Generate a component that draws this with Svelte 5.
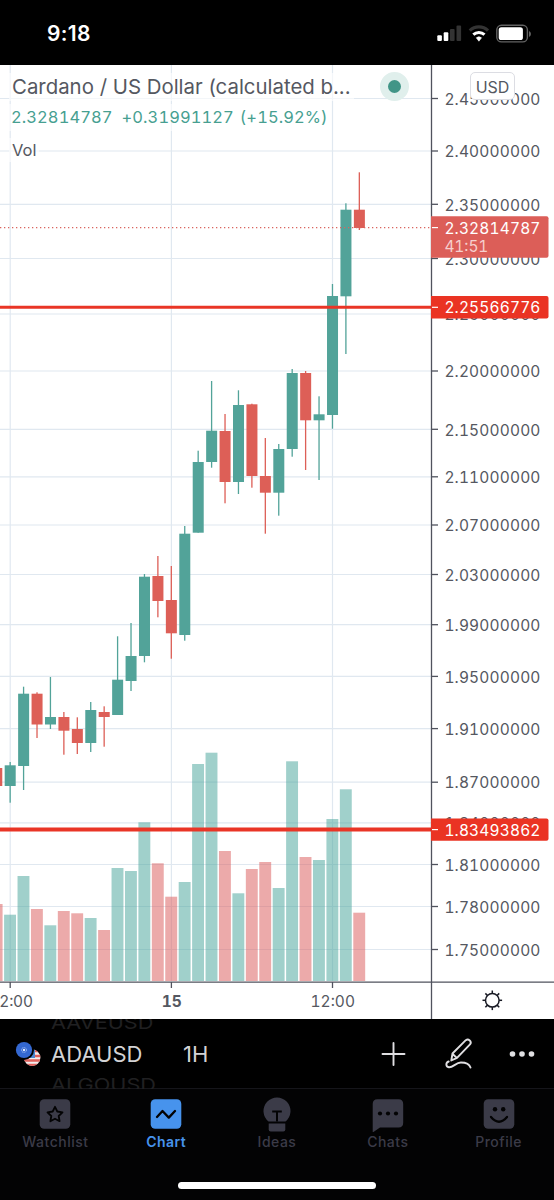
<script>
  const X0 = 10.2, STEP = 13.43;
  // [high, body top, body bottom, low, rising, volume top]
  const bars = [
    [768, 768, 786, 786, 0, 904], [762, 765.3, 786, 802.7, 1, 914.7], [686.7, 693.7, 766, 790, 1, 876],
    [692.3, 693.7, 724.5, 738, 0, 909], [677, 717, 724.5, 729, 1, 925.3], [712, 717, 730.7, 754.7, 0, 911],
    [717.3, 729, 743, 754, 0, 913.3], [702, 710, 743, 752, 1, 918], [706.3, 712, 717, 746.7, 0, 930],
    [636.3, 679.7, 715, 715, 1, 868], [623, 656, 681, 691, 1, 871], [574, 576.7, 656, 662.3, 1, 822.3],
    [556, 576, 601, 617.3, 0, 863.3], [566, 600, 633.3, 658.7, 0, 896.7], [526, 533.7, 635, 640.7, 1, 882],
    [450.7, 462, 532.7, 532.7, 1, 764], [381, 430.7, 462, 467.7, 1, 752.7], [414, 431, 482, 503.3, 0, 851],
    [390.3, 405, 482, 494, 1, 893.3], [403.7, 404.3, 476, 487.7, 0, 869], [438, 476, 492.7, 533.7, 0, 862],
    [444, 449, 492.7, 515.7, 1, 888], [369, 373, 449, 456.7, 1, 761.3], [371, 373, 420.3, 470, 0, 857],
    [396.3, 414.3, 420.3, 480, 1, 860], [284, 296, 415, 428.7, 1, 819], [203.3, 209.7, 296.3, 354, 1, 789.3],
    [172.3, 209.7, 228, 230, 0, 912.7],
  ].map((b, i) => ({ x: X0 + (i - 1) * STEP, hi: b[0], top: b[1], bot: b[2], lo: b[3], up: b[4], vol: b[5] }));
  const prices = [
    [98.5, '2.45'], [151, '2.40'], [204.3, '2.35'], [258.5, '2.30'], [314, '2.25'], [371, '2.20'], [429.3, '2.15'],
    [476.8, '2.11'], [525, '2.07'], [574.5, '2.03'], [624.7, '1.99'], [676.4, '1.95'], [728.6, '1.91'], [782.2, '1.87'],
    [822.8, '1.84'], [864.5, '1.81'], [906.5, '1.78'], [949.5, '1.75'],
  ];
  const rays = [10.2, 171.4, 332.5];
  const levels = [[307.3, '2.25566776', 3], [829.6, '1.83493862', 4]];
</script>

<div class="screen">
  <header class="status">
    <span class="clock">9:18</span>
    <svg width="98" height="20" viewBox="436 24 98 20">
      <g fill="#fff"><rect x="437.3" y="35.2" width="4.6" height="5.8" rx="1" /><rect x="443.7" y="32.3" width="4.600" height="8.700" rx="1" /></g>
      <g fill="#333"><rect x="450" y="29" width="4.600" height="12" rx="1" /><rect x="456.500" y="25.500" width="4.600" height="15.500" rx="1" /></g>
      <path d="M469.800 30.600a13.200 13.200 0 0 1 18.200 0" fill="none" stroke="#333" stroke-width="3.200" />
      <path d="M473.300 34.600a8.300 8.300 0 0 1 11.200 0" fill="none" stroke="#fff" stroke-width="3" />
      <path d="M476.300 37.800a4 4 0 0 1 5.200 0l-2.600 3.400z" fill="#fff" stroke="#fff" stroke-width=".6" />
      <rect x="496.800" y="25.300" width="30.600" height="16.600" rx="4.600" fill="none" stroke="#626262" stroke-width="1.400" />
      <rect x="498.700" y="27.200" width="24.200" height="12.800" rx="2.600" fill="#fff" />
      <path d="M529 31v6q2-1 2-3t-2-3z" fill="#626262" />
    </svg>
  </header>

  <main class="chart">
    <svg class="plot" width="554" height="954" viewBox="0 65 554 954">
      <g stroke="#e0e8f0" stroke-width="1.200">
        {#each prices as [y]}<line x1="0" x2="431" y1={y} y2={y} />{/each}
        {#each rays as x}<line x1={x} x2={x} y1="65" y2="981" />{/each}
      </g>
      {#each bars as b}
        <rect x={b.x - 6.1} y={b.vol} width="11.900" height={981 - b.vol} fill={b.up ? '#42a298' : '#da5656'} fill-opacity=".5" />
      {/each}
      {#each bars as b}
        <g fill={b.up ? '#52a399' : '#dd5f57'}>
          <rect x={b.x - 0.7} y={b.hi} width="1.300" height={b.lo - b.hi} />
          <rect x={b.x - 5.5} y={b.top} width="11" height={b.bot - b.top} />
        </g>
      {/each}
      <line x1="0" x2="431" y1="227.600" y2="227.600" stroke="#d9655f" stroke-width="1.200" stroke-dasharray="1.300 2.700" />
      {#each levels as [y, , w]}<line x1="0" x2="431" y1={y} y2={y} stroke="#e93526" stroke-width={w} />{/each}
      <g stroke="#50535e" stroke-width="1.300">
        <path d="M431.500 65V1019M0 982.200H554" />
        {#each prices as [y]}<line x1="431.500" x2="438" y1={y} y2={y} />{/each}
        {#each rays as x}<line x1={x} x2={x} y1="982" y2="988" />{/each}
      </g>
      <g class="label">
        {#each prices as [y, p]}<text x="444.400" y={y + 6.2} textLength="96">{p}000000</text>{/each}
        <text x="-10.500" y="1007.300" textLength="43.500">12:00</text>
        <text class="bold" x="161.800" y="1007.300" textLength="20">15</text>
        <text x="310.500" y="1007.300" textLength="44.500">12:00</text>
      </g>
      {#each levels as [y, p]}
        <path d="M431 {y - 11.2}h115.500q2 0 2 2v18.400q0 2-2 2H431z" fill="#ea3323" />
        <path d="M432 {y}h6" stroke="#fff" stroke-width="1.200" />
        <text class="label light" x="444.400" y={y + 5.900} textLength="96">{p}</text>
      {/each}
      <path d="M431 216.300h115.500q2 0 2 2v37.400q0 2-2 2H431z" fill="#dc5e58" />
      <path d="M432 227.600h6" stroke="#fff" stroke-width="1.200" />
      <text class="label light" x="444.400" y="233.500" textLength="96">2.32814787</text>
      <text class="label soft" x="444.400" y="252" textLength="44">41:51</text>
      <g fill="none" stroke="#181a24" stroke-width="1.500">
        <circle cx="492.300" cy="1000.300" r="6.800" />
        {#each [0, 45, 90, 135, 180, 225, 270, 315] as a}<path d="M492.300 993.500v-3" transform="rotate({a} 492.300 1000.300)" />{/each}
      </g>
    </svg>
    <div class="legend">
      <div class="title">Cardano / US Dollar (calculated b...</div>
      <div class="quote"><span>2.32814787</span><span>+0.31991127</span><span>(+15.92%)</span></div>
      <div class="vol">Vol</div>
    </div>
    <i class="live"></i>
    <span class="unit">USD</span>
  </main>

  <section class="toolbar">
    <svg class="pair" width="26" height="26" viewBox="15 1041 26 26">
      <defs><clipPath id="flag"><circle cx="32.200" cy="1057.800" r="8.200" /></clipPath></defs>
      <g clip-path="url(#flag)">
        <path d="M24 1049h17v17H24z" fill="#f3eeee" />
        <path d="M24 1051h17M24 1056h17M24 1060.500h17M24 1065h17" stroke="#e0605b" stroke-width="2.300" />
        <path d="M24 1049h11v9H24z" fill="#4b86d0" />
      </g>
      <circle cx="24" cy="1050" r="10" fill="#000" />
      <circle cx="24" cy="1050" r="8.100" fill="#3468d1" />
      <circle cx="24" cy="1050" r="2.500" fill="none" stroke="#a9c2f5" stroke-width="1" stroke-dasharray="1 .6" />
      <circle cx="24" cy="1050" r="1.200" fill="#e5edff" />
    </svg>
    <div class="wheel"><span class="ghost">AAVEUSD</span><span class="symbol">ADAUSD</span><span class="ghost">ALGOUSD</span></div>
    <span class="interval">1H</span>
    <svg class="tools" width="160" height="36" viewBox="378 1036 160 36" fill="none" stroke="#e0dfe2" stroke-width="1.900" stroke-linecap="round" stroke-linejoin="round">
      <path d="M382.500 1054h22M393.500 1043v22" />
      <path d="M451.300 1060.500l1.200-7 13.300-13.300q2-1.400 3.900.2 2 2 .3 4l-13 13.500zM452.400 1053.800l4.300 4.100" />
      <path d="M448.700 1061.500c-3 1-3.300 5 .2 5.700 4 .5 7-4.700 12-4.700 5 0 8.500 1.500 9.600 5" />
      <g fill="#e0dfe2" stroke="none"><circle cx="512.500" cy="1054" r="2.800" /><circle cx="522" cy="1054" r="2.800" /><circle cx="531.500" cy="1054" r="2.800" /></g>
    </svg>
  </section>

  <nav class="tabs">
    <div class="tab"><svg width="36" height="36" viewBox="-18 -18 36 36"><rect x="-15.300" y="-14.700" width="30.600" height="29.400" rx="4.500" fill="currentColor" /><path d="M0-7.200 2.300-2.500 7.500-1.700 3.700 2 4.600 7.200 0 4.700-4.600 7.200-3.700 2-7.500-1.700-2.300-2.500z" fill="none" stroke="#030304" stroke-width="1.800" stroke-linejoin="round" /></svg><span>Watchlist</span></div>
    <div class="tab on"><svg width="36" height="36" viewBox="-18 -18 36 36"><rect x="-15.300" y="-14.700" width="30.600" height="29.400" rx="4.500" fill="currentColor" /><path d="M-9 3-3.500-3 2.800 3.600 9-3" fill="none" stroke="#030304" stroke-width="2.300" stroke-linecap="round" stroke-linejoin="round" /></svg><span>Chart</span></div>
    <div class="tab"><svg width="36" height="36" viewBox="-18 -18 36 36"><path d="M-8.500 7.500A13.500 13.500 0 1 1 8.500 7.500z" fill="currentColor" /><path d="M-8.300 9.600H8.300v5.800q0 2-2 2H-6.300q-2 0-2-2z" fill="currentColor" /><path d="M-4.800-2.500H4.800M0-2.500V7.500" stroke="#030304" stroke-width="2" /></svg><span>Ideas</span></div>
    <div class="tab"><svg width="36" height="36" viewBox="-18 -18 36 36"><path d="M-10.500-14.700h21q4.700 0 4.700 4.700V8.800q0 4.700-4.700 4.700H-8l-7.300 5V-10q0-4.700 4.800-4.700z" fill="currentColor" /><g fill="#030304"><circle cx="-8" cy="-.5" r="2.100" /><circle cy="-.5" r="2.100" /><circle cx="8" cy="-.5" r="2.100" /></g></svg><span>Chats</span></div>
    <div class="tab"><svg width="36" height="36" viewBox="-18 -18 36 36"><rect x="-15.300" y="-14.700" width="30.600" height="29.400" rx="4.500" fill="currentColor" /><circle cx="-4" cy="-4.700" r="2.200" fill="#030304" /><circle cx="4.200" cy="-4.700" r="2.200" fill="#030304" /><path d="M-8 3Q0 12.500 8 3" fill="none" stroke="#030304" stroke-width="2.300" stroke-linecap="round" /></svg><span>Profile</span></div>
    <i class="home"></i>
  </nav>
</div>

<style>
  :global(body) { margin: 0; background: #000; }
  .screen { width: 554px; height: 1200px; display: flex; flex-direction: column; background: #000; font-family: Inter, "Liberation Sans", sans-serif; overflow: hidden; }
  .status { height: 65px; box-sizing: border-box; padding: 0 20px 0 47px; display: flex; justify-content: space-between; align-items: flex-start; color: #fff; }
  .status svg { margin-top: 24px; }
  .clock { margin-top: 21px; font-size: 21px; line-height: 26px; font-weight: 600; letter-spacing: .3px; }
  .chart { position: relative; height: 954px; background: #fff; }
  .plot { display: block; }
  .label { font-size: 15.500px; fill: #555861; font-feature-settings: "tnum"; }
  .light { fill: #fff; }
  .soft { fill: #f6cfcd; }
  .bold { font-weight: 700; }
  .legend { position: absolute; left: 9px; top: 8px; color: #555861; display: flex; flex-direction: column; align-items: flex-start; }
  .legend > div { background: rgba(255, 255, 255, .6); padding: 0 3px; white-space: nowrap; }
  .title { font-size: 20.400px; line-height: 28px; }
  .quote { display: flex; margin-top: 3px; margin-left: -1px; font-size: 16.500px; line-height: 27px; color: #479f91; font-feature-settings: "tnum"; letter-spacing: .08px; }
  .quote span:nth-child(2) { margin: 0 6px 0 9px; }
  .vol { margin-top: 7px; font-size: 16.500px; line-height: 24px; }
  .live { position: absolute; left: 380px; top: 7px; width: 13px; height: 13px; border: 8px solid #e0efec; border-radius: 50%; background: #419587; }
  .unit { position: absolute; left: 470px; top: 7px; width: 45px; height: 28px; box-sizing: border-box; border: 1.500px solid #dcdde3; border-radius: 5px; background: #fff; color: #555861; font-size: 16px; line-height: 28px; text-align: center; }
  .toolbar { height: 70px; box-sizing: border-box; padding: 0 16px 0 15px; display: flex; align-items: center; border-bottom: 1px solid #15151a; color: #d3d3d5; }
  .wheel { margin-left: 10px; width: 132px; height: 70px; display: flex; flex-direction: column; justify-content: center; overflow: hidden; font-size: 22px; white-space: nowrap; }
  .symbol { line-height: 40px; }
  .ghost { font-size: 22px; line-height: 22px; color: #202022; transform: scale(.985, .8); transform-origin: left center; }
  .interval { font-size: 22px; }
  .tools { margin-left: auto; }
  .tabs { position: relative; height: 111px; display: flex; background: #030304; color: #3b3b48; }
  .tab { flex: 1; padding-top: 7px; display: flex; flex-direction: column; align-items: center; font-size: 14px; font-weight: 500; line-height: 19px; letter-spacing: .5px; }
  .tab svg { display: block; }
  .on { color: #4793ed; font-weight: 600; letter-spacing: .4px; }
  .home { position: absolute; left: 178px; bottom: 11px; width: 198px; height: 7px; border-radius: 4px; background: #fff; }
</style>
